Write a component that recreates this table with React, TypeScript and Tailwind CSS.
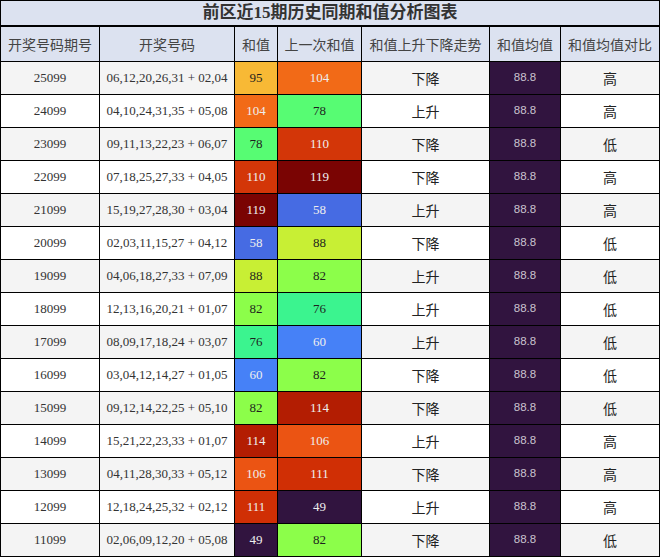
const rows: [string, string, number, number, string, string][] = [
  ["25099", "06,12,20,26,31 + 02,04", 95, 104, "下降", "高"],
  ["24099", "04,10,24,31,35 + 05,08", 104, 78, "上升", "高"],
  ["23099", "09,11,13,22,23 + 06,07", 78, 110, "下降", "低"],
  ["22099", "07,18,25,27,33 + 04,05", 110, 119, "下降", "高"],
  ["21099", "15,19,27,28,30 + 03,04", 119, 58, "上升", "高"],
  ["20099", "02,03,11,15,27 + 04,12", 58, 88, "下降", "低"],
  ["19099", "04,06,18,27,33 + 07,09", 88, 82, "上升", "低"],
  ["18099", "12,13,16,20,21 + 01,07", 82, 76, "上升", "低"],
  ["17099", "08,09,17,18,24 + 03,07", 76, 60, "上升", "低"],
  ["16099", "03,04,12,14,27 + 01,05", 60, 82, "下降", "低"],
  ["15099", "09,12,14,22,25 + 05,10", 82, 114, "下降", "低"],
  ["14099", "15,21,22,23,33 + 01,07", 114, 106, "上升", "高"],
  ["13099", "04,11,28,30,33 + 05,12", 106, 111, "下降", "高"],
  ["12099", "12,18,24,25,32 + 02,12", 111, 49, "上升", "高"],
  ["11099", "02,06,09,12,20 + 05,08", 49, 82, "下降", "低"],
];

// heat colours (turbo-like scale, 49..119)
const heat: Record<number, { bg: string; light: boolean }> = {
  49: { bg: "bg-[#31143f]", light: true },
  58: { bg: "bg-[#466be3]", light: true },
  60: { bg: "bg-[#4681f7]", light: true },
  76: { bg: "bg-[#3bf48f]", light: false },
  78: { bg: "bg-[#57fc73]", light: false },
  82: { bg: "bg-[#8cfe4a]", light: false },
  88: { bg: "bg-[#c8ef34]", light: false },
  95: { bg: "bg-[#f8b935]", light: false },
  104: { bg: "bg-[#f26a17]", light: true },
  106: { bg: "bg-[#eb5413]", light: true },
  110: { bg: "bg-[#d33608]", light: true },
  111: { bg: "bg-[#d02f05]", light: true },
  114: { bg: "bg-[#b31d02]", light: true },
  119: { bg: "bg-[#7a0403]", light: true },
};

const cols = "grid grid-cols-[99px_135px_43px_84px_128px_71px_98px]";
const cell = "flex items-center justify-center border-r border-black";
const headers = ["开奖号码期号", "开奖号码", "和值", "上一次和值", "和值上升下降走势", "和值均值", "和值均值对比"];

function HeatCell({ v }: { v: number }) {
  const h = heat[v];
  return (
    <div className={`${cell} ${h.bg} ${h.light ? "text-[#eeeeee]" : "text-[#1f1f1f]"}`}>{v}</div>
  );
}

export default function App() {
  return (
    <div
      className="w-[660px] border border-black text-[#333] bg-white"
      style={{ fontFamily: '"Liberation Serif", "Noto Sans CJK SC", serif' }}
    >
      <div className="h-[26px] bg-[#dce2f0] border-b-2 border-black flex items-center justify-center text-[17px] font-bold text-[#333]">
        前区近15期历史同期和值分析图表
      </div>
      <div className={`${cols} h-[35px] bg-[#dce2f0] border-b border-black text-[14px] text-[#444]`}>
        {headers.map((h, i) => (
          <div
            key={h}
            className={`flex items-center justify-center ${i < 6 ? "border-r border-black" : ""}`}
            style={{ fontFamily: '"Noto Sans CJK SC", sans-serif' }}
          >
            {h}
          </div>
        ))}
      </div>
      {rows.map(([issue, nums, sum, prev, trend, cmp], i) => (
        <div
          key={issue}
          className={`${cols} ${i < rows.length - 1 ? "h-[33px] border-b border-black" : "h-[32px]"} ${
            i % 2 === 0 ? "bg-[#f4f4f4]" : "bg-white"
          } text-[13px]`}
        >
          <div className={cell}>{issue}</div>
          <div className={cell}>{nums}</div>
          <HeatCell v={sum} />
          <HeatCell v={prev} />
          <div className={`${cell} text-[14px] text-[#222]`} style={{ fontFamily: '"Noto Sans CJK SC", sans-serif' }}>
            {trend}
          </div>
          <div
            className={`${cell} bg-[#31143f] text-[11.5px] text-[#c9c3cf]`}
            style={{ fontFamily: '"Liberation Sans", sans-serif' }}
          >
            88.8
          </div>
          <div
            className="flex items-center justify-center text-[14px] text-[#222]"
            style={{ fontFamily: '"Noto Sans CJK SC", sans-serif' }}
          >
            {cmp}
          </div>
        </div>
      ))}
    </div>
  );
}
